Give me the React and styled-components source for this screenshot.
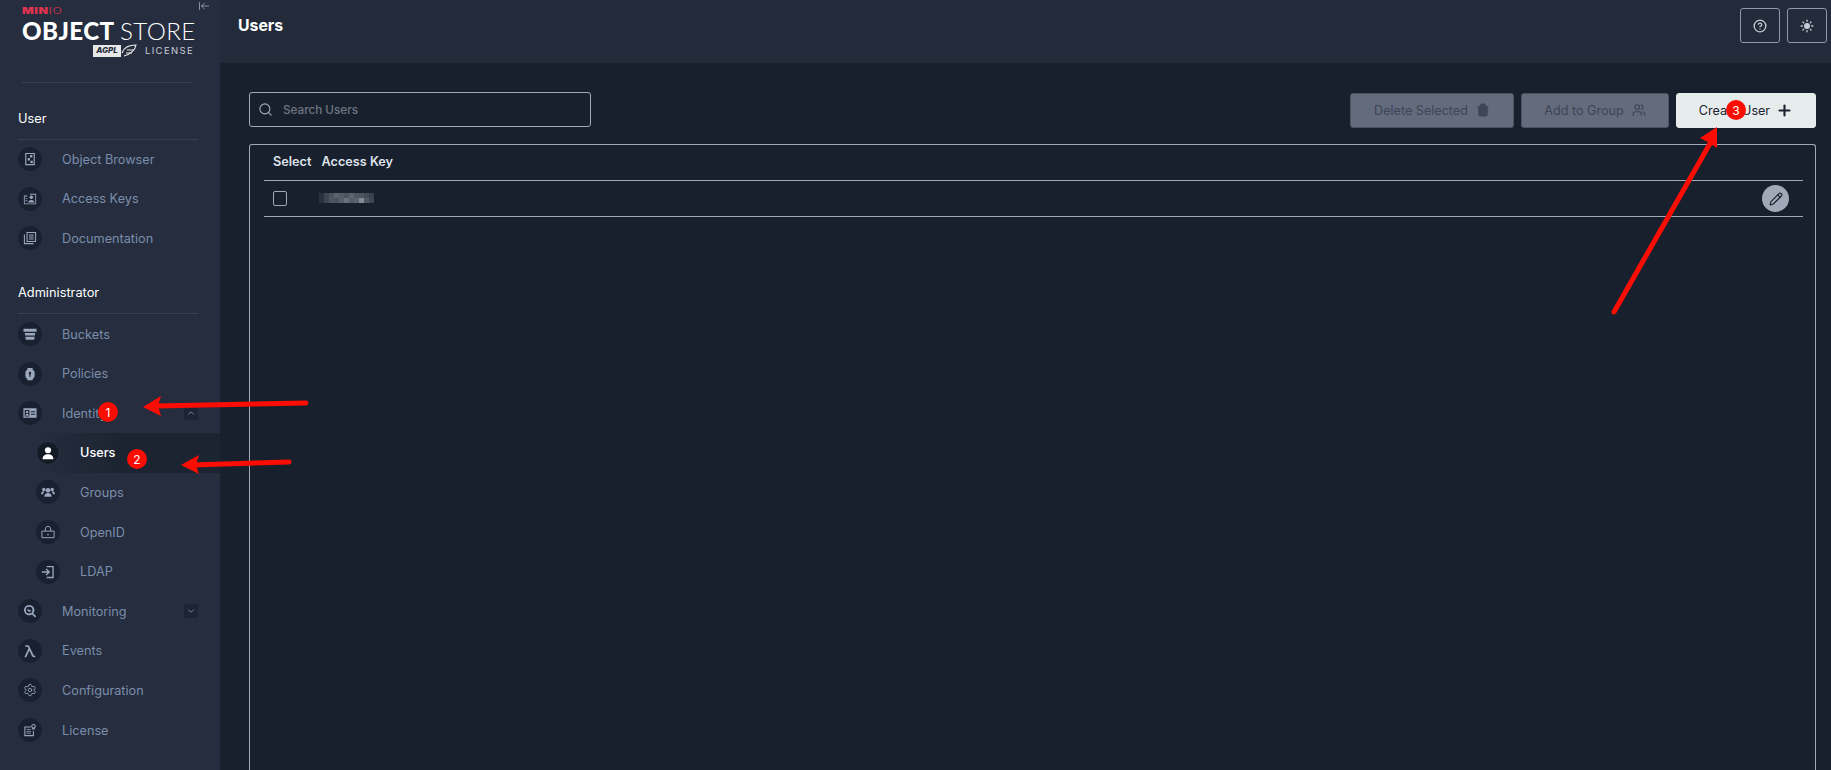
import React from 'react';
import styled, { createGlobalStyle } from 'styled-components';
import { ArrowLeftToLine, ChevronDown, ChevronUp, CircleHelp, Pencil, Plus, Search, Settings, Sun, Trash2, Users as UsersIcon } from 'lucide-react';

const Global = createGlobalStyle`
  html, body { margin: 0; padding: 0; height: 100%; overflow: hidden; background: #19202d; }
  body { font-family: Inter, "Noto Sans", sans-serif; }
  * { box-sizing: border-box; }
`;

const Page = styled.div`
  position: relative;
  display: flex;
  width: 100%;
  height: 770px;
  overflow: hidden;
`;

const Sidebar = styled.aside`
  position: relative;
  flex: 0 0 220px;
  display: flex;
  flex-direction: column;
  background: #252d3e;
  padding: 0 0 0 18px;
`;

const Collapse = styled.button`
  position: absolute;
  top: 0;
  left: 198px;
  padding: 0;
  border: 0;
  background: none;
  color: #c4ccd9;
  display: flex;
`;

const Logo = styled.div`
  width: 171px;
  margin-left: 4px;
  height: 83px;
  padding-top: 7px;
  border-bottom: 1px solid #39414f;
`;

const MinioWord = styled.div`
  font-size: 8.5px;
  line-height: 8px;
  letter-spacing: 0.4px;
  color: #e2334f;
  font-weight: 900;
  transform: scaleX(1.45);
  transform-origin: left center;
  span { font-weight: 300; }
`;

const StoreWord = styled.div`
  font-family: Lato, Inter, sans-serif;
  margin-top: 3px;
  font-size: 24.2px;
  line-height: 25px;
  letter-spacing: 0.4px;
  color: #fff;
  font-weight: 900;
  white-space: nowrap;
  span { font-weight: 300; }
`;

const LicenseRow = styled.div`
  display: flex;
  justify-content: flex-end;
  align-items: center;
  gap: 8px;
  margin-top: 1px;
`;

const Agpl = styled.div`
  display: flex;
  align-items: center;
  height: 13px;
  color: #e8e8e8;
`;

const AgplBox = styled.span`
  display: block;
  width: 28px;
  height: 12px;
  background: #e8e8e8;
  color: #252d3e;
  font-size: 8px;
  line-height: 11px;
  font-weight: 800;
  font-style: italic;
  text-align: center;
  overflow: hidden;
`;

const LicenseWord = styled.span`
  font-size: 9.5px;
  letter-spacing: 1.35px;
  margin-right: -1px;
  color: #c9ced6;
`;

const Section = styled.div`
  width: 180px;
  height: ${p => p.$first ? '56.5px' : '56px'};
  display: flex;
  align-items: flex-end;
  padding-bottom: 12px;
  border-bottom: 1px solid #39414f;
  color: #fff;
  font-size: 12.8px;
  line-height: 16px;
`;

const NavItem = styled.div`
  display: flex;
  align-items: center;
  width: ${p => p.$sub ? '184px' : '180px'};
  height: 39.6px;
  margin-left: ${p => p.$sub ? '18px' : '0'};
  color: ${p => p.$active ? '#fff' : '#7b8dab'};
  font-size: 12.7px;
  font-weight: ${p => p.$active ? 500 : 400};
  background: ${p => p.$active ? 'linear-gradient(90deg, #252d3e 0%, #1d2431 45%)' : 'none'};
`;

const IconDisc = styled.span`
  flex: 0 0 24px;
  width: 24px;
  height: 24px;
  border-radius: 50%;
  display: flex;
  align-items: center;
  justify-content: center;
  background: ${p => p.$active ? '#141a26' : '#19202f'};
  border: 1px solid ${p => p.$active ? '#2d3648' : '#19202f'};
  color: ${p => p.$active ? '#fff' : '#9aa7bd'};
  margin-right: 20px;
`;

const Label = styled.span`
  flex: 1;
`;

const Toggle = styled.span`
  width: 14px;
  height: 14px;
  display: flex;
  align-items: center;
  justify-content: center;
  background: #1d2535;
  color: #8d99ad;
`;

const Main = styled.main`
  flex: 1;
  min-width: 0;
  display: flex;
  flex-direction: column;
`;

const TopBar = styled.header`
  flex: 0 0 63px;
  display: flex;
  align-items: flex-start;
  justify-content: space-between;
  padding: 8px 4px 0 18px;
  background: #232a3a;
`;

const Title = styled.h1`
  margin: 8px 0 0;
  font-size: 15.8px;
  line-height: 20px;
  font-weight: 700;
  color: #fff;
`;

const TopActions = styled.div`
  display: flex;
  gap: 7px;
`;

const SquareButton = styled.button`
  width: 40px;
  height: 35px;
  padding: 0;
  display: flex;
  align-items: center;
  justify-content: center;
  background: transparent;
  color: #c5ccd8;
  border: 1px solid #8f98a8;
  border-radius: 3px;
`;

const Content = styled.div`
  flex: 1;
  display: flex;
  flex-direction: column;
  padding: 29px 15px 0 29px;
  background: #19202d;
`;

const Toolbar = styled.div`
  display: flex;
  align-items: center;
  height: 35px;
  gap: 7px;
`;

const SearchBox = styled.label`
  width: 342px;
  height: 35px;
  margin-right: auto;
  display: flex;
  align-items: center;
  gap: 10px;
  padding-left: 8px;
  color: #a6aebd;
  border: 1px solid #a1a9b8;
  border-radius: 3px;
  font-size: 11.7px;
  font-weight: 500;
  span { color: #6f7682; }
`;

const ActionButton = styled.button`
  width: ${p => p.$w}px;
  height: 35px;
  margin-top: 1px;
  padding: 0;
  display: flex;
  align-items: center;
  justify-content: center;
  gap: ${p => p.$primary ? '6px' : '8px'};
  font-family: inherit;
  font-size: 12.6px;
  border-radius: 3px;
  border: 1px solid ${p => p.$primary ? '#e6ebeb' : '#4b5365'};
  background: ${p => p.$primary ? '#e6ebeb' : '#636b7d'};
  color: ${p => p.$primary ? '#1c2230' : '#3e4555'};
`;

const TablePanel = styled.section`
  flex: 1;
  margin-top: 17px;
  padding: 0 12px 0 14px;
  border: 1px solid #a1a9b8;
  border-bottom: 0;
  border-radius: 3px 3px 0 0;
`;

const Row = styled.div`
  display: flex;
  align-items: center;
  height: 36px;
  padding-left: 9px;
  padding-bottom: ${p => p.$head ? '3px' : '0'};
  border-bottom: 1px solid #a1a9b8;
`;

const HeadCell = styled.span`
  font-size: 12.7px;
  font-weight: 600;
  color: #dde2ea;
  margin-right: 10px;
`;

const Checkbox = styled.span`
  width: 14px;
  height: 15px;
  border: 1px solid #a1a9b8;
  border-radius: 2px;
  margin-right: 32px;
`;

const Blur = styled.div`
  display: grid;
  grid-template-columns: repeat(11, 5px);
  grid-auto-rows: 5px;
  margin-top: -1px;
`;

const Pixel = styled.i`
  background: ${p => p.$c};
`;

const EditButton = styled.button`
  margin-left: auto;
  margin-right: 14px;
  width: 27px;
  height: 27px;
  padding: 0;
  display: flex;
  align-items: center;
  justify-content: center;
  border: 0;
  border-radius: 50%;
  background: #a1a9b9;
  color: #1c2230;
`;

const Marks = styled.svg`
  position: absolute;
  inset: 0;
  width: 100%;
  height: 100%;
  pointer-events: none;
`;

const Badge = styled.span`
  position: absolute;
  left: ${p => p.$x - 10}px;
  top: ${p => p.$y - 10}px;
  width: 20px;
  height: 20px;
  border-radius: 50%;
  display: flex;
  align-items: center;
  justify-content: center;
  background: #fb0d04;
  color: #fff;
  font-size: 12px;
`;

const Svg = ({ children }) => (
  <svg width="14" height="14" viewBox="0 0 16 16" fill="currentColor">{children}</svg>
);

const ObjectIcon = () => <Svg><path fillRule="evenodd" d="M2.500 1h11v14h-11zM3.800 2.200v11.600h8.400V2.200z" /><rect x="8" y="3.500" width="2.700" height="2.700" /><rect x="5.300" y="7" width="2.700" height="2.700" /><rect x="8.500" y="10" width="2.700" height="2.700" /></Svg>;
const KeysIcon = () => <Svg><path fillRule="evenodd" d="M1 4h4v1H2v8h12V3H8V2h7v12H1z" /><circle cx="9.500" cy="6" r="2" /><path d="M6 12c0-2 1.500-3 3.500-3s3.500 1 3.500 3zM3 7h2v1H3zM3 9.500h2v1H3z" /></Svg>;
const DocsIcon = () => <Svg><path fillRule="evenodd" d="M4 1h11v11.500H4zM5.200 2.200v9.100h8.600V2.200z" /><path d="M1 4h1.200v9.800H12V15H1zM6.800 4h5.400v1H6.800zM6.800 6.300h5.400v1H6.800zM6.800 8.600h5.400v1H6.800z" /></Svg>;
const BucketIcon = () => <Svg><path d="M0.500 2h15v3.500H.5zM2 6.800h12l-.4 3H2.400zM2.600 11h10.800l-.6 3.500H3.200z" /></Svg>;
const PolicyIcon = () => <Svg><path fillRule="evenodd" d="M5 1h6v2.200c1.500.7 2.300 1.800 2.300 3.300v3.600c0 1.600-1.200 3-2.300 3.600V15H5v-1.300c-1.100-.6-2.300-2-2.300-3.600V6.500c0-1.500.8-2.600 2.300-3.300zM8 5.500a1.500 1.500 0 0 0-.7 2.800V11h1.400V8.300A1.500 1.500 0 0 0 8 5.500z" /></Svg>;
const IdentityIcon = () => <Svg><path fillRule="evenodd" d="M.5 2.500h15v11H.5zM2 4.500v7.500h5.300V4.500zM9 6v1.200h5V6zM9 8.800V10h5V8.800z" /><circle cx="4.700" cy="6.800" r="1.400" /><path d="M2.800 11c0-1.500 1-2.200 1.900-2.200s1.900.7 1.900 2.200z" /></Svg>;
const UserIcon = () => <Svg><circle cx="8" cy="4.800" r="3.500" /><path d="M1.800 15c0-3.500 2.500-5.500 6.200-5.500s6.200 2 6.200 5.500z" /></Svg>;
const GroupIcon = () => <Svg><circle cx="8" cy="6" r="2.600" /><circle cx="3.200" cy="5" r="2" /><circle cx="12.800" cy="5" r="2" /><path d="M3.800 13.500c0-3 1.700-4.400 4.200-4.400s4.200 1.400 4.200 4.400zM0 10.500c0-2 1.200-3.300 3.200-3.300l.8.100c-1 1-1.500 2-1.600 3.200zM16 10.500c0-2-1.200-3.300-3.200-3.300l-.8.100c1 1 1.500 2 1.600 3.200z" /></Svg>;
const OpenIdIcon = () => <Svg><path fill="none" stroke="currentColor" strokeWidth="1.100" d="M1 7h14v7.500H1zM5 7V4.500C5 2.800 6.200 1.500 8 1.500s3 1.300 3 3V7" /><circle cx="8" cy="11" r=".9" /></Svg>;
const LdapIcon = () => <Svg><path d="M6.500 1H14.500V15H6.500v-1.600H13V2.600H6.500z" /><path d="M1 7.100h6.300L5.200 5l1.200-1.100L10.500 8l-4.100 4.100L5.200 11l2.100-2.100H1z" /></Svg>;
const MonitorIcon = () => <Svg><path fillRule="evenodd" d="M7 1a6 6 0 0 1 4.700 9.700L15 14l-1.400 1.400-3.300-3.300A6 6 0 1 1 7 1zm0 2.200a3.800 3.800 0 1 0 0 7.600 3.800 3.800 0 0 0 0-7.600z" /><path d="M5 6h1.500l1 1.500L9 6.500v1.800L7.300 9.500 6 8H5z" /></Svg>;
const LambdaIcon = () => <Svg><path d="M2.500 1.500h2.800c1 0 1.700.5 2.100 1.500L12 12.600c.2.500.5.700 1 .7h1V15h-1.800c-1 0-1.700-.5-2.100-1.500L7.300 7.500 3.700 15H1.500l4.700-10-.6-1.300c-.2-.4-.5-.5-.9-.5H2.500z" /></Svg>;
const LicenseIcon = () => <Svg><path d="M1.500 4H9v1.200H2.700v8.600h8.600V9h1.200v6h-11z" /><path d="M4 7h5v1H4zM4 9h5v1H4zM4 11h5v1H4z" /><path fillRule="evenodd" d="M12 1a2.700 2.700 0 0 1 1.400 5v2l-1.400-.8-1.400.8V6A2.700 2.700 0 0 1 12 1zm0 1.300a1.400 1.400 0 1 0 0 2.800 1.400 1.400 0 0 0 0-2.800z" /></Svg>;

const userNav = [
  { label: 'Object Browser', icon: <ObjectIcon /> },
  { label: 'Access Keys', icon: <KeysIcon /> },
  { label: 'Documentation', icon: <DocsIcon /> },
];

const adminNav = [
  { label: 'Buckets', icon: <BucketIcon /> },
  { label: 'Policies', icon: <PolicyIcon /> },
  { label: 'Identity', icon: <IdentityIcon />, toggle: 'up' },
  { label: 'Users', icon: <UserIcon />, sub: true, active: true },
  { label: 'Groups', icon: <GroupIcon />, sub: true },
  { label: 'OpenID', icon: <OpenIdIcon />, sub: true },
  { label: 'LDAP', icon: <LdapIcon />, sub: true },
  { label: 'Monitoring', icon: <MonitorIcon />, toggle: 'down' },
  { label: 'Events', icon: <LambdaIcon /> },
  { label: 'Configuration', icon: <Settings size={14} strokeWidth={1.5} /> },
  { label: 'License', icon: <LicenseIcon /> },
];

const blurPixels = [
  '#2b323f', '#3e4451', '#4b515d', '#5c626d', '#565c67', '#4d535f', '#5d636e', '#50565f', '#4d535f', '#464c58', '#3a404d',
  '#2b323f', '#3e4451', '#50565f', '#4a505c', '#5a606b', '#6c727c', '#565c67', '#5d636e', '#858b94', '#50565f', '#3f4551',
];

const Nav = ({ items }) => items.map(item => (
  <NavItem key={item.label} $sub={item.sub} $active={item.active}>
    <IconDisc $active={item.active}>{item.icon}</IconDisc>
    <Label>{item.label}</Label>
    {item.toggle === 'up' && <Toggle><ChevronUp size={10} /></Toggle>}
    {item.toggle === 'down' && <Toggle><ChevronDown size={10} /></Toggle>}
  </NavItem>
));

function Arrow({ d, head }) {
  return (
    <>
      <path d={d} stroke="#fb0d04" strokeWidth="5" strokeLinecap="round" fill="none" />
      <polygon points={head} fill="#fb0d04" />
    </>
  );
}

export default function App() {
  return (
    <Page>
      <Global />
      <Sidebar>
        <Collapse><ArrowLeftToLine size={12} strokeWidth={1.25} /></Collapse>
        <Logo>
          <MinioWord>MIN<span>IO</span></MinioWord>
          <StoreWord>OBJECT <span>STORE</span></StoreWord>
          <LicenseRow>
            <Agpl>
              <AgplBox>AGPL</AgplBox>
              <svg width="16" height="13" viewBox="0 0 16 13" fill="none" stroke="currentColor" strokeWidth="1.2">
                <path d="M1 9C3 3 9 1 15 1c-1 5-5 9-12 11" />
                <path d="M6 6h7M5 9h6" />
              </svg>
            </Agpl>
            <LicenseWord>LICENSE</LicenseWord>
          </LicenseRow>
        </Logo>
        <Section $first>User</Section>
        <Nav items={userNav} />
        <Section>Administrator</Section>
        <Nav items={adminNav} />
      </Sidebar>
      <Main>
        <TopBar>
          <Title>Users</Title>
          <TopActions>
            <SquareButton><CircleHelp size={14} strokeWidth={2.25} /></SquareButton>
            <SquareButton><Sun size={14} strokeWidth={2.25} fill="currentColor" /></SquareButton>
          </TopActions>
        </TopBar>
        <Content>
          <Toolbar>
            <SearchBox><Search size={15} strokeWidth={1.75} /><span>Search Users</span></SearchBox>
            <ActionButton $w={164}>Delete Selected <Trash2 size={14} fill="currentColor" /></ActionButton>
            <ActionButton $w={148}>Add to Group <UsersIcon size={14} /></ActionButton>
            <ActionButton $w={140} $primary>Create User <Plus size={17} strokeWidth={3} /></ActionButton>
          </Toolbar>
          <TablePanel>
            <Row $head>
              <HeadCell>Select</HeadCell>
              <HeadCell>Access Key</HeadCell>
            </Row>
            <Row>
              <Checkbox />
              <Blur>{blurPixels.map((c, i) => <Pixel key={i} $c={c} />)}</Blur>
              <EditButton><Pencil size={14} /></EditButton>
            </Row>
          </TablePanel>
        </Content>
      </Main>
      <Marks viewBox="0 0 1831 770">
        <Arrow d="M306 403 L155 406" head="143,407 161,396 158,406 161,416" />
        <Arrow d="M289 462 L192 465" head="181,465 199,455 196,465 199,474" />
        <Arrow d="M1614 312 L1712 140" head="1717,127 1717,148 1708,142 1700,138" />
      </Marks>
      <Badge $x={108} $y={412}>1</Badge>
      <Badge $x={137} $y={459}>2</Badge>
      <Badge $x={1736} $y={110}>3</Badge>
    </Page>
  );
}
